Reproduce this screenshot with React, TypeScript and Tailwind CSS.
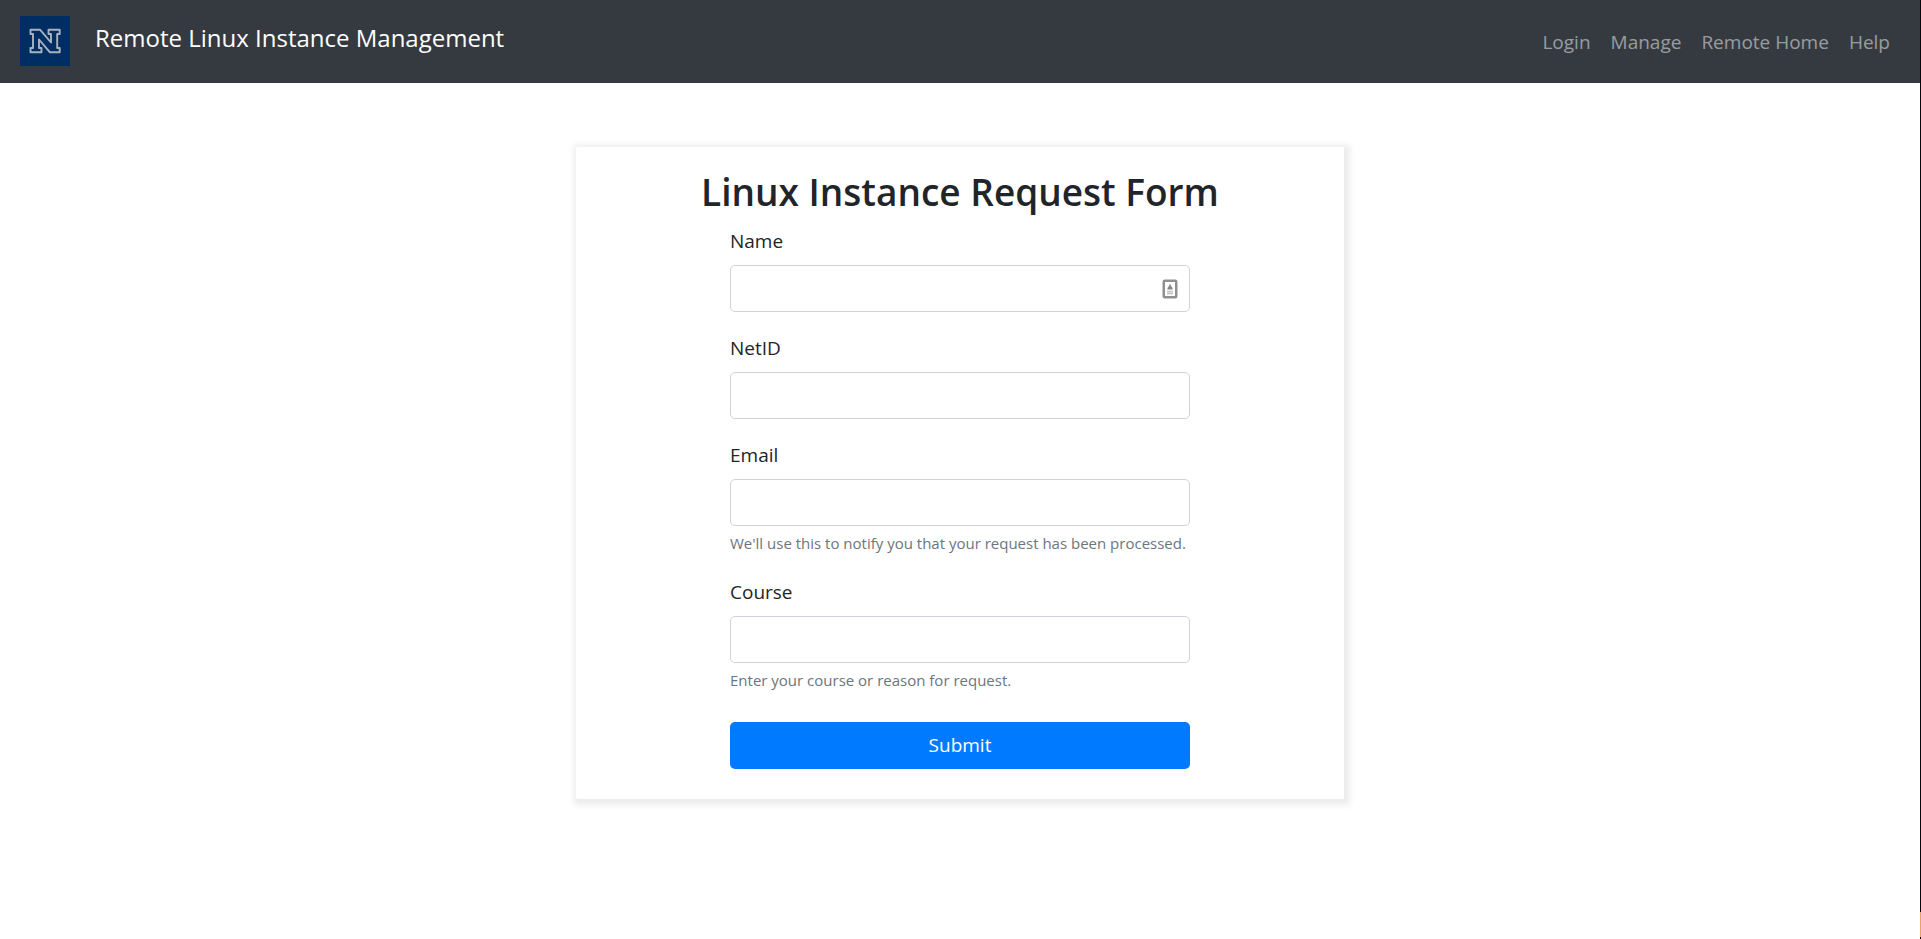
import type { ReactNode } from "react";

const navLinks = ["Login", "Manage", "Remote Home", "Help"];

function Logo() {
  return (
    <svg viewBox="0 0 50 50" className="size-[50px]" role="img" aria-label="Nevada N">
      <rect width="50" height="50" fill="#002e62" />
      <path
        d="M10.5 13.7H20L31 26.5V18H28.5V13.7H39.7V18H37.2V32H39.7V36.3H30L19 23.5V32H21.5V36.3H10.5V32H13V18H10.5Z"
        fill="none"
        stroke="#a8b2c0"
        strokeWidth="1.9"
        strokeLinejoin="round"
      />
    </svg>
  );
}

function ContactIcon() {
  return (
    <svg viewBox="0 0 16 20" className="h-5 w-4" aria-hidden="true">
      <rect x="1.75" y="1.75" width="12.5" height="16.5" rx="1" fill="#fff" stroke="#909090" strokeWidth="2.5" />
      <path d="M8 4.5L9 7L10.5 9V10.5H5.5V9L7 7Z" fill="#858585" />
      <path d="M5 12.5H11M5 14.5H11" stroke="#c0c0c0" strokeWidth="1.5" />
    </svg>
  );
}

type FieldProps = { id: string; label: string; type?: string; hint?: string; icon?: ReactNode };

function Field({ id, label, type = "text", hint, icon }: FieldProps) {
  return (
    <div className="mb-[21px] flex flex-col">
      <label htmlFor={id} className="mb-[9px] text-[19px] leading-[30px]">
        {label}
      </label>
      <div className="relative">
        <input
          id={id}
          type={type}
          aria-describedby={hint ? `${id}-hint` : undefined}
          className="block h-[47px] w-full rounded-[5px] border border-[#ced4da] bg-white px-4 text-[19px] outline-none focus:border-[#80bdff]"
        />
        {icon && <span className="absolute top-1/2 right-3 -translate-y-1/2">{icon}</span>}
      </div>
      {hint && (
        <small id={`${id}-hint`} className="mt-[5px] text-[15px] leading-[25px] text-[#6c757d]">
          {hint}
        </small>
      )}
    </div>
  );
}

export default function App() {
  return (
    <div className="flex min-h-screen bg-white font-['Open_Sans','Noto_Sans',sans-serif] text-[#212529]">
      <div className="flex-1">
        <nav className="flex items-center justify-between bg-[#343a40] pt-4 pr-[30px] pb-[17px] pl-5">
          <a href="#" className="flex gap-[25px] text-[24px] leading-[44px] text-white">
            <Logo />
            Remote Linux Instance Management
          </a>
          <ul className="flex gap-5 pt-0.5 text-[19px] leading-[30px] text-white/50">
            {navLinks.map((name) => (
              <li key={name}>
                <a href="#" className="hover:text-white/75">
                  {name}
                </a>
              </li>
            ))}
          </ul>
        </nav>
        <main className="mx-auto mt-16 flex w-2/5 flex-col items-center bg-white pt-5 pb-[30px] shadow-[2px_2px_6px_4px_rgba(0,0,0,0.08)]">
          <h1 className="mb-[9px] text-[37px] leading-[50px] font-semibold">Linux Instance Request Form</h1>
          <form className="flex w-[460px] flex-col">
            <Field id="name" label="Name" icon={<ContactIcon />} />
            <Field id="netid" label="NetID" />
            <Field
              id="email"
              label="Email"
              type="email"
              hint="We'll use this to notify you that your request has been processed."
            />
            <Field id="course" label="Course" hint="Enter your course or reason for request." />
            <button type="submit" className="mt-2 h-[47px] rounded-[5px] bg-[#007bff] text-[19px] text-white">
              Submit
            </button>
          </form>
        </main>
      </div>
      <div className="flex w-px flex-col bg-[#05070d] pb-0.5" aria-hidden="true">
        <div className="mt-auto h-[25px] bg-[#f0a060]" />
      </div>
    </div>
  );
}
